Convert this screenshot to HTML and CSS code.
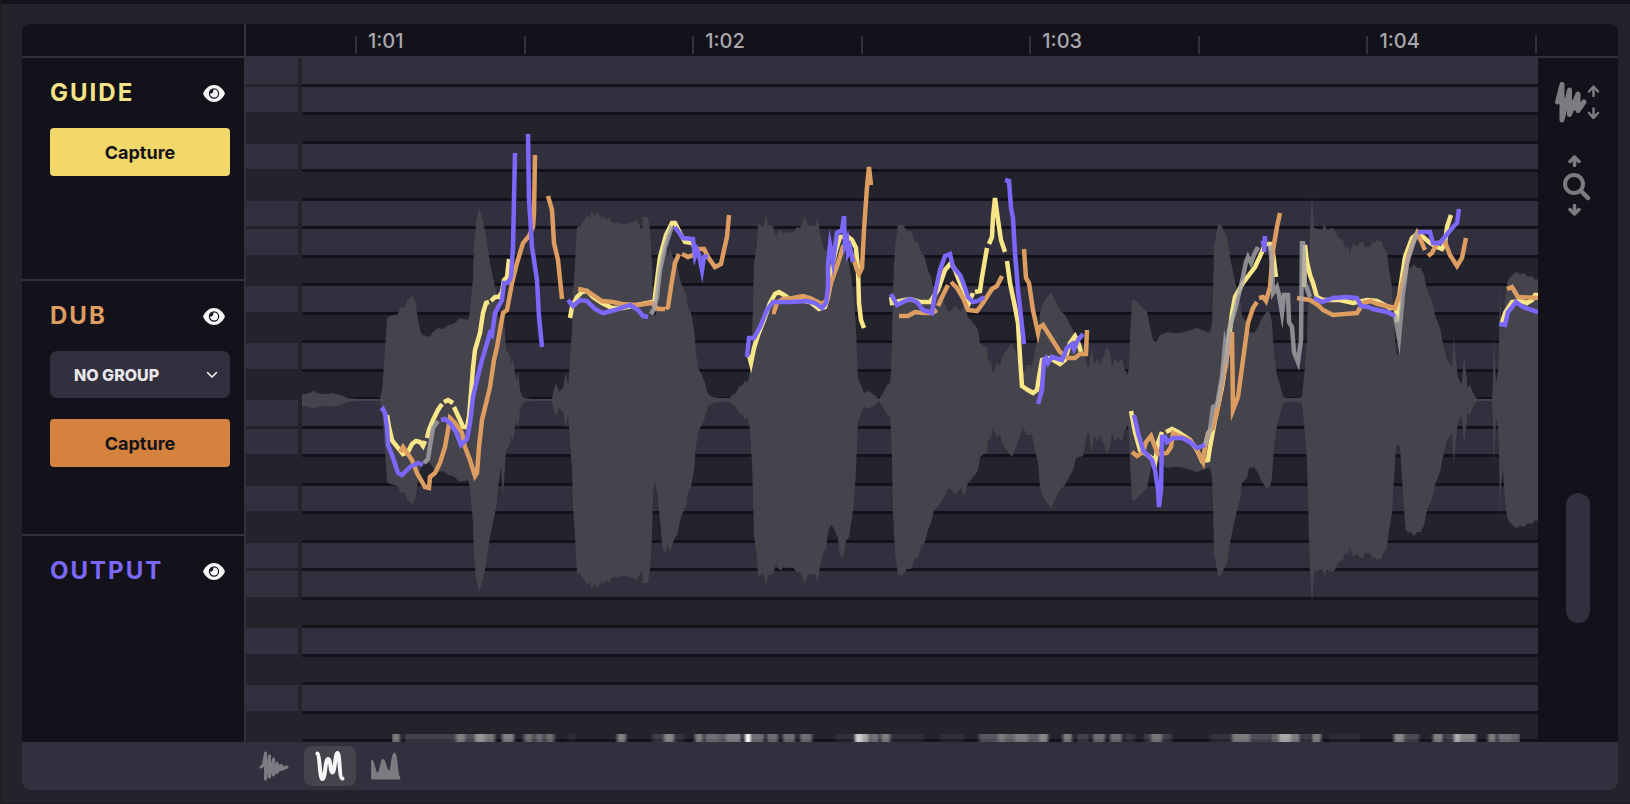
FILE: index.html
```html
<!DOCTYPE html>
<html lang="en">
  <head>
    <meta charset="utf-8">
    <meta name="viewport" content="width=device-width, initial-scale=1.0">
    <title>Pitch Editor</title>
    <link rel="stylesheet" href="styles.css">
  </head>
  <body>
    <svg width="0" height="0" class="symbols" aria-hidden="true">
      <symbol id="eye" viewBox="0 0 22 17">
        <path fill="#f7f7f8" d="M0 8.500C2.500 3 6.500 0 11 0S19.500 3 22 8.500C19.500 14 15.500 17 11 17S2.500 14 0 8.500Z"/>
        <circle cx="11" cy="8.500" r="4.600" fill="#f7f7f8" stroke="#13121a" stroke-width="1.200"/>
        <path fill="#13121a" d="M6.500 8.500C8.500 9 10.500 8 10.500 4.200C8.500 4.200 6.500 6 6.500 8.500Z"/>
      </symbol>
    </svg>
    <main class="panel">
      <header class="ruler">
        <div class="ruler-corner"></div>
        <div class="ticks">
          <span>1:01</span><span></span>
          <span>1:02</span><span></span>
          <span>1:03</span><span></span>
          <span>1:04</span><span></span>
        </div>
      </header>

      <div class="editor">
        <aside class="tracks">
          <section class="track">
            <div class="track-head">
              <h2 class="guide">GUIDE</h2>
              <button class="eye" aria-label="Show guide"><svg><use href="#eye"/></svg></button>
            </div>
            <button class="capture capture-guide">Capture</button>
          </section>
          <section class="track">
            <div class="track-head">
              <h2 class="dub">DUB</h2>
              <button class="eye" aria-label="Show dub"><svg><use href="#eye"/></svg></button>
            </div>
            <div class="group">
              <select aria-label="Group">
                <option>NO GROUP</option>
                <option>GROUP 1</option>
                <option>GROUP 2</option>
              </select>
              <svg class="chevron" viewBox="0 0 12 8"><path d="M1.500 1.500L6 6L10.500 1.500"/></svg>
            </div>
            <button class="capture capture-dub">Capture</button>
          </section>
          <section class="track">
            <div class="track-head">
              <h2 class="output">OUTPUT</h2>
              <button class="eye" aria-label="Show output"><svg><use href="#eye"/></svg></button>
            </div>
          </section>
        </aside>

        <div class="rows keys" id="keys"></div>
        <div class="plot">
          <div class="rows lanes" id="lanes"></div>
          <svg id="curves" viewBox="302 58 1236 684" preserveAspectRatio="none">
            <defs>
              <filter id="soft" x="0" y="0" width="1" height="1"><feGaussianBlur stdDeviation="1.5 0"/></filter>
            </defs>
            <path id="wave"/>
            <g id="density" filter="url(#soft)"></g>
            <path id="yellow" class="line line-guide"/>
            <path id="orange" class="line line-dub"/>
            <path id="gray" class="line line-gray"/>
            <path id="purple" class="line line-output"/>
          </svg>
        </div>

        <div class="side">
          <button class="side-button" aria-label="Waveform height">
            <svg width="46" height="42" viewBox="0 0 46 42">
              <path stroke-width="5" d="M2.500 20L7 2.500V38L14.500 8V32.500L23 12V28.500L29 20M7 16L11 24L14.500 18L19 26L23 18"/>
              <path stroke-width="2.500" d="M38.500 14V5M34 9.500L38.500 4.500L43 9.500M38.500 26.500V35M34 31L38.500 36L43 31"/>
            </svg>
          </button>
          <button class="side-button" aria-label="Vertical zoom">
            <svg width="30" height="61" viewBox="0 0 30 61">
              <path stroke-width="3.500" d="M11.500 10.500V3M7 6.500L11.500 2L16 6.500M11.500 50.500V58M7 54.500L11.500 59L16 54.500"/>
              <circle cx="11" cy="29" r="9" stroke-width="4"/>
              <path stroke-width="4.500" d="M18 36L25 43"/>
            </svg>
          </button>
          <div class="scroll" role="scrollbar" aria-label="Pitch range" aria-controls="curves" aria-valuenow="70"></div>
        </div>
      </div>

      <footer class="toolbar">
        <button class="tool" aria-label="Waveform view">
          <svg width="30" height="30" viewBox="0 0 30 30">
            <path d="M2 16L4.500 14L6.500 2V28L10.500 5V26L14.500 8V24L18 12V21.500L22 14.500V18.500L28 16M6 15H23"/>
          </svg>
        </button>
        <button class="tool active" aria-label="Pitch view">
          <svg width="30" height="30" viewBox="0 0 30 30">
            <path d="M2.500 2.500C5 4 4.500 28 7.500 28S10 8 13 8S15 21.500 17.500 21.500S20 2 22.500 2S24 27.500 27.500 27.500"/>
          </svg>
        </button>
        <button class="tool" aria-label="Level view">
          <svg width="30" height="30" viewBox="0 0 30 30">
            <path class="solid" d="M1 9C3 8 4 22 6.500 22S10 8 12 8S15.500 20 18 20S20.500 2 23.500 2S26 24 29 27V28H1Z"/>
          </svg>
        </button>
      </footer>
    </main>
    <script src="script.js"></script>
  </body>
</html>
```
FILE: styles.css
```css
:root {
  --bg: #23232c;
  --dark: #13121a;
  --lilac: #322f3f;
  --gray: #45434b;
  --icon: #7d7b82;
  --yellow: #f5e387;
  --orange: #dd9d60;
  --purple: #7b68fa;
}

* {
  box-sizing: border-box;
}
body {
  margin: 0;
  min-height: 100vh;
  display: flex;
  flex-direction: column;
  padding: 20px 12px 13px 20px;
  background: var(--bg);
  border-top: 4px solid var(--dark);
  border-left: 2px solid #1e1e20;
  border-bottom: 1px solid #1c1a22;
  font-family: Inter, "Liberation Sans", sans-serif;
}
button {
  font-family: inherit;
  border: 0;
  padding: 0;
  background: none;
  cursor: pointer;
}
svg {
  display: block;
}
.symbols {
  position: absolute;
}
.panel {
  flex: 1;
  display: flex;
  flex-direction: column;
  background: var(--dark);
  border-radius: 8px;
  overflow: hidden;
}

/* time ruler */
.ruler {
  display: flex;
  height: 34px;
  border-bottom: 2px solid var(--lilac);
}
.ruler-corner {
  width: 224px;
  border-right: 2px solid var(--lilac);
}
.ticks {
  flex: 1;
  display: grid;
  grid-template-columns: repeat(7, 1fr) 83px;
  padding: 12px 0 2px 109px;
}
.ticks span {
  border-left: 2px solid var(--lilac);
  padding-left: 11px;
  font-size: 20px;
  line-height: 10px;
  font-weight: 500;
  color: #a9a8ad;
}

/* tracks */
.editor {
  flex: 1;
  display: flex;
}
.tracks {
  width: 224px;
  display: grid;
  grid-template-rows: 223px 255px 1fr;
  border-right: 2px solid var(--lilac);
}
.track {
  display: flex;
  flex-direction: column;
  gap: 21px;
  padding: 21px 14px 21px 28px;
  border-bottom: 2px solid var(--lilac);
}
.track:last-child {
  border-bottom: 0;
}
.track-head {
  display: flex;
  align-items: center;
  justify-content: space-between;
  height: 28px;
  padding-right: 5px;
}
h2 {
  margin: 0;
  font-size: 24px;
  line-height: 28px;
  font-weight: 700;
  letter-spacing: 2px;
}
.guide {
  color: var(--yellow);
}
.dub {
  color: var(--orange);
}
.output {
  color: var(--purple);
}
.eye svg {
  width: 22px;
  height: 17px;
}
.capture {
  height: 48px;
  border-radius: 4px;
  font-size: 18px;
  font-weight: 700;
  color: var(--dark);
}
.capture-guide {
  background: #f2d769;
}
.capture-dub {
  background: #d5823f;
}
.group {
  position: relative;
}
.group select {
  display: block;
  width: 100%;
  height: 47px;
  padding: 0 24px;
  appearance: none;
  border: 0;
  border-radius: 7px;
  background: var(--lilac);
  color: #e8e7ea;
  font-family: inherit;
  font-size: 16px;
  font-weight: 800;
}
.chevron {
  position: absolute;
  right: 12px;
  top: 20px;
  width: 12px;
  height: 8px;
  fill: none;
  stroke: #f7f7f8;
  stroke-width: 1.5;
  stroke-linecap: round;
  stroke-linejoin: round;
  pointer-events: none;
}

/* pitch grid */
.rows {
  display: grid;
  grid-template-rows: repeat(24, 1fr);
  background: var(--bg);
}
.rows div {
  border-bottom: 3px solid var(--bg);
}
.rows .white {
  background: var(--lilac);
}
.keys {
  width: 56px;
  padding-right: 4px;
}
.plot {
  flex: 1;
  position: relative;
  display: grid;
}
.lanes div {
  border-bottom-color: var(--dark);
}
#curves {
  position: absolute;
  inset: 0;
  width: 100%;
  height: 100%;
}
#wave {
  fill: var(--gray);
}
#density {
  fill: #ffffff;
}
.line {
  fill: none;
  stroke-width: 4.5;
  stroke-miterlimit: 8;
  vector-effect: non-scaling-stroke;
}
.line-guide {
  stroke: #f8e789;
}
.line-dub {
  stroke: var(--orange);
}
.line-gray {
  stroke: #a5a4a9;
  stroke-opacity: 0.8;
}
.line-output {
  stroke: var(--purple);
}

/* right column */
.side {
  width: 80px;
  display: flex;
  flex-direction: column;
  align-items: center;
  gap: 31px;
  padding: 24px 0 119px;
}
.side-button svg {
  fill: none;
  stroke: var(--icon);
  stroke-linecap: round;
  stroke-linejoin: round;
}
.scroll {
  width: 24px;
  height: 130px;
  margin-top: auto;
  border-radius: 12px;
  background: var(--lilac);
}

/* bottom toolbar */
.toolbar {
  display: flex;
  align-items: center;
  gap: 4px;
  height: 48px;
  padding-left: 226px;
  background: var(--lilac);
}
.tool {
  display: flex;
  align-items: center;
  justify-content: center;
  width: 52px;
  height: 40px;
  border-radius: 8px;
}
.tool svg {
  fill: none;
  stroke: var(--icon);
  stroke-width: 3;
  stroke-linecap: round;
  stroke-linejoin: round;
}
.tool.active {
  background: var(--gray);
}
.tool.active svg {
  stroke: #f7f7f8;
  stroke-width: 4;
}
.tool .solid {
  fill: var(--icon);
  stroke-width: 1;
}
```
FILE: script.js
```js
// two octaves, top to bottom: w = white key, b = black key
var pattern = "wwbwbwwbwbwbwwbwbwwbwbwb"

// x and half height of the waveform
var wave = "302 6 306 6 310 7 313 9 318 7 323 6 328 6 333 7 336 6 340 5 348 2 357 1 380 1 382 10 383 23 385 50 387 82 390 84 398 86 400 92 405 93 407 100 410 102 412 104 415 100 417 87 420 70 422 65 430 63 433 68 438 72 443 71 448 75 453 76 460 82 467 80 469 82 471 100 473 123 474 157 476 177 479 192 482 183 486 165 490 137 494 118 497 103 498 87 501 67 503 98 506 50 510 45 511 35 513 42 515 27 517 20 518 31 520 10 522 4 525 2 532 1 552 1 553 7 556 17 559 8 563 12 566 28 568 15 569 27 570 43 572 70 573 107 575 137 577 173 580 174 583 178 587 184 590 183 592 190 594 184 597 188 602 182 604 184 607 180 609 183 612 177 617 177 623 176 630 177 637 180 641 172 642 171 643 183 648 183 650 170 652 137 653 93 655 83 657 93 659 110 661 130 662 147 665 153 668 144 670 153 672 145 675 138 677 135 681 117 687 103 688 93 691 87 694 70 696 47 698 32 702 25 705 17 708 6 713 3 720 2 730 2 732 5 735 6 740 14 743 15 744 19 748 18 750 30 752 63 753 97 754 137 757 157 758 177 763 173 766 185 768 175 773 174 776 163 778 168 781 171 783 166 785 168 793 167 797 173 800 172 805 183 808 175 815 174 818 182 820 167 824 150 826 150 828 132 831 125 833 127 838 138 839 153 841 156 843 159 846 141 849 137 852 117 854 103 856 70 858 22 860 17 864 7 868 9 873 6 879 1 883 7 885 11 888 16 890 17 891 30 892 60 893 113 895 153 897 167 898 175 903 175 907 169 911 169 915 158 918 157 922 145 924 145 928 130 931 123 934 110 940 104 943 99 948 88 952 90 955 94 961 88 964 96 968 83 975 75 978 70 980 57 985 53 987 53 988 40 991 38 993 28 997 37 1000 35 1003 45 1012 57 1017 45 1020 37 1023 28 1027 35 1032 35 1035 50 1038 63 1040 87 1043 97 1051 108 1060 90 1065 85 1073 70 1076 58 1083 56 1086 40 1088 30 1089 35 1092 53 1094 36 1098 42 1099 35 1103 42 1107 53 1110 48 1112 33 1115 42 1118 37 1122 42 1124 32 1128 25 1129 37 1130 63 1132 100 1135 100 1142 93 1147 88 1150 73 1153 60 1156 58 1160 65 1168 68 1173 67 1180 67 1187 69 1197 72 1205 69 1210 67 1212 77 1213 103 1214 153 1217 170 1219 178 1222 173 1227 163 1230 143 1233 128 1237 110 1240 100 1242 83 1247 78 1249 68 1254 67 1258 73 1262 82 1267 89 1270 87 1272 77 1274 47 1277 25 1280 15 1283 3 1288 2 1297 2 1302 3 1304 23 1306 47 1307 60 1308 103 1309 137 1310 170 1312 205 1314 172 1318 171 1322 170 1324 176 1327 170 1332 172 1335 170 1338 163 1343 160 1345 152 1348 155 1350 147 1353 157 1357 154 1362 159 1365 153 1370 153 1372 158 1375 157 1377 161 1379 158 1381 160 1383 153 1387 148 1389 130 1392 113 1394 80 1396 47 1398 44 1400 48 1402 77 1404 110 1406 131 1412 133 1414 136 1417 132 1421 132 1424 125 1427 110 1432 99 1435 85 1440 72 1443 57 1447 40 1452 33 1454 63 1456 37 1458 23 1461 16 1462 18 1464 45 1467 20 1467 13 1470 15 1473 7 1477 1 1492 1 1493 20 1494 65 1496 17 1498 27 1499 53 1500 117 1501 85 1503 70 1505 100 1507 117 1510 123 1515 127 1518 128 1520 125 1522 127 1525 126 1528 123 1532 124 1535 120 1538 121"

// each string is one unbroken stroke of x,y points
var lines = {
  yellow: [
    "387,415 389,427 392,440 394,443 399,449 403,454 408,452 412,444 416,441 420,442 423,446 425,441",
    "427,438 429,430 433,420 438,410 442,404",
    "444,402 448,400 453,403",
    "454,407 460,420 463,427 467,427 469,417 471,393 473,368 475,350 480,333 483,313 486,303 489,302",
    "491,301 495,297 499,297 502,292 504,280 507,277 509,259",
    "570,318 572,307 577,297 582,292 587,291 593,297 602,303 612,308 623,308 637,305 652,302 654,305 657,280 660,257 666,235 672,223 675,223 680,233 685,242 692,243 696,250",
    "749,355 751,363 754,348 758,335 764,320 770,303 775,294 779,292 784,295 790,299 800,300 810,302 819,309 825,307 828,297 831,280 833,263 836,250 840,237 847,236 852,240 856,248 858,270 859,303 861,320 864,328",
    "891,297 892,303 900,301 910,299 920,302 930,302 938,290 945,270 951,263 955,270 960,283 965,293 969,303 973,293",
    "975,292 980,291 982,277 987,248",
    "989,244 992,237 993,217 995,198 998,220 1001,240 1005,252",
    "1007,261 1010,283 1015,307 1018,323 1020,357 1022,386 1028,390 1033,393 1037,390 1039,377 1042,360 1050,358 1060,364 1065,360 1070,343 1075,336 1078,342 1081,352",
    "1131,411 1135,432 1140,450 1152,458 1155,463 1158,443 1162,432",
    "1166,432 1172,429 1178,432 1190,440 1197,450 1202,461 1208,460 1210,447 1215,420 1222,387 1228,347 1232,313 1235,297 1243,283 1255,267 1262,252 1265,244 1270,244 1273,253 1276,277",
    "1304,287 1305,245 1307,262 1310,275 1313,283 1317,297 1323,300 1340,300 1353,303 1367,300 1377,301 1390,308 1396,308 1397,322 1400,290 1405,257 1412,238 1417,234 1423,237 1430,243 1437,247 1442,249 1445,243 1447,227 1451,215",
    "1502,323 1505,313 1512,302 1520,301 1527,303 1532,300 1535,295 1538,295"
  ],
  orange: [
    "400,452 403,447 405,450 412,460 417,473 425,487 429,488 430,477 435,473 440,463 445,447 448,430 450,418 455,423 462,433 465,447 470,460 475,476 477,473 479,447 482,420 490,387 494,360 497,347 503,313 507,310 512,283 517,263 523,243 529,236 533,227 534,213 535,155",
    "548,196 552,210 554,243 558,260 562,299",
    "578,289 584,290 590,293 602,301 613,302 622,304 637,305 652,303 658,309 665,309",
    "666,309 668,307 671,287 675,263 679,254",
    "682,254 688,257 693,255 698,249 704,249 708,257 715,267 721,264 724,250 727,237 729,215",
    "772,312 774,312 777,303 783,299 793,298 803,296 810,298 822,304 827,300 831,283 838,263 843,247 847,246 853,257 857,270 859,274 862,268 864,230 867,187 869,167 871,185",
    "899,316 908,316 915,312 923,313 932,313 937,310",
    "938,306 943,295 948,285",
    "951,282 957,288 963,298 968,310 977,311 983,303 992,289 997,286 1002,276",
    "1024,249 1026,278 1029,283 1033,310 1038,333 1039,328 1043,325 1048,333 1060,352 1068,358 1075,358 1080,354 1086,354 1087,330",
    "1132,452 1137,456 1143,452 1146,442 1151,436 1155,447 1158,454 1167,453 1171,447 1173,433 1177,435 1190,440 1197,450 1203,462 1205,447 1208,433 1213,428 1218,407 1225,367 1232,332 1233,410 1238,397 1243,360 1248,323 1253,308 1257,302",
    "1259,298 1263,297 1266,301 1270,287 1273,250 1277,227 1280,213",
    "1297,298 1310,300 1318,305 1323,310 1333,315 1357,313 1363,303 1370,301 1378,304 1395,308 1400,293 1405,273 1408,257 1413,242 1417,233 1422,243 1425,250",
    "1428,256 1432,253 1437,243 1445,242 1450,255 1457,266 1462,258 1466,238",
    "1507,289 1512,287 1518,297 1538,298"
  ],
  gray: [
    "424,463 428,459 431,440 433,428 438,421",
    "651,314 654,309 657,297 660,270 665,247 672,226",
    "1205,445 1210,430 1213,407 1217,405 1222,377 1225,345 1227,355 1229,330 1235,310 1243,277 1246,262 1248,257 1251,263 1254,255 1258,247",
    "1270,245 1272,267 1273,293 1277,287 1279,295 1282,313 1284,295 1288,295 1289,322 1292,327 1294,352 1298,362 1301,340 1302,241",
    "1303,241 1305,283 1310,297",
    "1395,315 1399,338 1403,293 1407,263 1412,247 1417,233"
  ],
  purple: [
    "381,411 383,409 385,413 387,427 388,445 392,455 398,473 402,475 410,467 418,463 423,465",
    "441,420 445,419 450,423 456,432 461,445 467,439 470,423 473,397 477,380 482,360 487,343 490,333 492,335 495,313 502,300 504,283 508,283 511,277 513,247 515,153",
    "528,134 529,200 532,247 537,280 539,317 542,347",
    "568,300 573,306 580,300 587,301 595,309 603,313 615,310 630,305 638,310 643,316 648,317",
    "675,227 683,238 693,239 695,256 697,250 699,255 702,270 704,257 708,256",
    "747,357 749,338 754,338 760,327 767,310 773,302 790,302 807,301 815,303 822,308 826,303 828,287 828,263 830,245 833,262 835,247 837,233 842,230 844,216 845,245 847,240 848,253 850,248 853,262",
    "891,294 897,305 903,302 910,299 917,302 923,310 932,313 935,293 940,270 945,256 950,254 953,267 960,275 964,285 968,297 973,302 978,301 984,297",
    "1005,180 1009,181 1011,208 1013,218 1015,253 1018,290 1024,344",
    "1038,404 1042,390 1044,360 1046,358 1048,363 1052,357 1062,360 1067,348 1072,344 1074,349 1078,340 1083,334",
    "1134,415 1138,433 1143,450 1152,460 1155,470 1158,490 1159,507",
    "1159,507 1161,490 1162,437 1165,437 1167,442 1173,438 1182,438 1190,442 1197,448 1205,445",
    "1261,243 1265,242 1264,252",
    "1265,236 1264,250",
    "1314,298 1322,302 1333,298 1347,297 1357,298 1361,306 1368,307 1373,309 1387,312 1395,316",
    "1418,232 1430,232 1433,243 1440,243 1448,233 1453,227 1457,223 1459,209",
    "1499,324 1505,325 1508,312 1516,302 1523,307 1538,312"
  ]
}

// from, to, brightness
var density = [
  [392, 400, 0.4], [405, 456, 0.14], [456, 465, 0.42], [465, 475, 0.2], [475, 485, 0.52], [485, 495, 0.38],
  [502, 514, 0.42], [523, 555, 0.2], [525, 532, 0.2], [537, 542, 0.2], [547, 553, 0.2], [568, 575, 0.05],
  [617, 626, 0.42], [652, 664, 0.12], [664, 674, 0.46], [674, 684, 0.08], [695, 703, 0.42], [705, 719, 0.34],
  [719, 726, 0.26], [726, 741, 0.42], [745, 751, 1], [752, 764, 0.34], [767, 778, 0.34], [783, 795, 0.34],
  [800, 812, 0.34], [835, 855, 0.06], [855, 862, 0.8], [862, 869, 0.6], [870, 879, 0.36], [881, 890, 0.42],
  [890, 923, 0.06], [941, 964, 0.06], [979, 998, 0.24], [998, 1005, 0.4], [1005, 1015, 0.3], [1015, 1028, 0.42],
  [1028, 1039, 0.28], [1039, 1048, 0.46], [1063, 1072, 0.4], [1077, 1089, 0.14], [1093, 1105, 0.34],
  [1110, 1122, 0.34], [1125, 1135, 0.1], [1144, 1172, 0.12], [1151, 1162, 0.3], [1210, 1232, 0.08],
  [1232, 1250, 0.4], [1250, 1270, 0.2], [1271, 1279, 0.3], [1279, 1291, 0.6], [1291, 1300, 0.4],
  [1302, 1310, 0.12], [1312, 1321, 0.42], [1330, 1360, 0.04], [1394, 1404, 0.46], [1404, 1419, 0.18],
  [1433, 1443, 0.42], [1445, 1454, 0.15], [1454, 1460, 0.65], [1460, 1476, 0.44], [1488, 1496, 0.4],
  [1498, 1511, 0.36], [1511, 1520, 0.3]
]

function drawRows(id) {
  var box = document.getElementById(id)
  for (var key of pattern) {
    var row = document.createElement("div")
    if (key == "w") row.className = "white"
    box.appendChild(row)
  }
}

function drawWave() {
  var n = wave.split(" ").map(Number)
  var top = []
  var bottom = []
  for (var i = 0; i < n.length; i += 2) {
    top.push(n[i] + "," + (400 - n[i + 1]))
    bottom.unshift(n[i] + "," + (400 + n[i + 1]))
  }
  document.getElementById("wave").setAttribute("d", "M" + top.concat(bottom).join("L") + "Z")
}

function drawLines() {
  for (var id in lines) {
    var d = lines[id].map(s => "M" + s.split(" ").join("L")).join("")
    document.getElementById(id).setAttribute("d", d)
  }
}

function drawDensity() {
  var group = document.getElementById("density")
  for (var [from, to, level] of density) {
    var rect = document.createElementNS("http://www.w3.org/2000/svg", "rect")
    rect.setAttribute("x", from)
    rect.setAttribute("y", 734)
    rect.setAttribute("width", to - from)
    rect.setAttribute("height", 8)
    rect.setAttribute("opacity", level)
    group.appendChild(rect)
  }
}

drawRows("keys")
drawRows("lanes")
drawWave()
drawLines()
drawDensity()
```
